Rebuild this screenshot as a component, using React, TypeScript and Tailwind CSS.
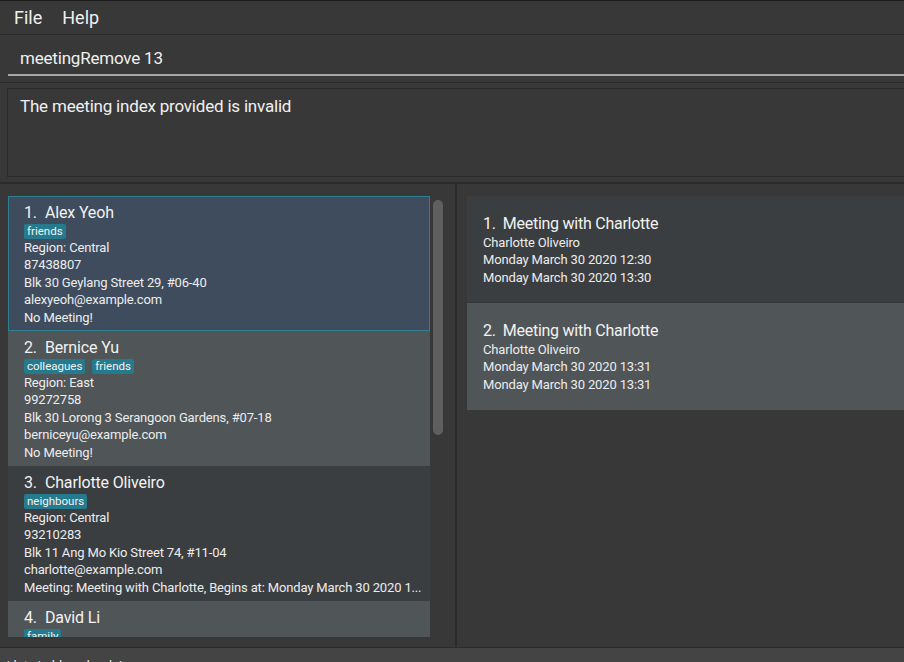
import React from "react";

type Person = {
  name: string;
  tags: string[];
  region: string;
  phone: string;
  address: string;
  email: string;
  meeting: string;
};

const persons: Person[] = [
  {
    name: "Alex Yeoh",
    tags: ["friends"],
    region: "Region: Central",
    phone: "87438807",
    address: "Blk 30 Geylang Street 29, #06-40",
    email: "alexyeoh@example.com",
    meeting: "No Meeting!",
  },
  {
    name: "Bernice Yu",
    tags: ["colleagues", "friends"],
    region: "Region: East",
    phone: "99272758",
    address: "Blk 30 Lorong 3 Serangoon Gardens, #07-18",
    email: "berniceyu@example.com",
    meeting: "No Meeting!",
  },
  {
    name: "Charlotte Oliveiro",
    tags: ["neighbours"],
    region: "Region: Central",
    phone: "93210283",
    address: "Blk 11 Ang Mo Kio Street 74, #11-04",
    email: "charlotte@example.com",
    meeting: "Meeting: Meeting with Charlotte, Begins at: Monday March 30 2020 1...",
  },
  {
    name: "David Li",
    tags: ["family"],
    region: "Region: North",
    phone: "91031282",
    address: "Blk 436 Serangoon Gardens Street 26, #16-43",
    email: "lidavid@example.com",
    meeting: "No Meeting!",
  },
];

const meetings = [
  { title: "Meeting with Charlotte", who: "Charlotte Oliveiro", start: "Monday March 30 2020 12:30", end: "Monday March 30 2020 13:30" },
  { title: "Meeting with Charlotte", who: "Charlotte Oliveiro", start: "Monday March 30 2020 13:31", end: "Monday March 30 2020 13:31" },
];

function PersonCard({ p, index }: { p: Person; index: number }) {
  const selected = index === 0;
  const bg = selected
    ? "bg-[#3f4c5e] border border-[#2f7f95]"
    : index % 2 === 1
    ? "bg-[#505558] border border-transparent"
    : "bg-[#3b3e40] border border-transparent";

  return (
    <div className={`h-[135px] shrink-0 pl-[15px] pr-[8px] pt-[6px] ${bg}`}>
      <div className="flex gap-[8px] text-[16px] leading-[20px] tracking-[-0.15px] text-[#f2f2f2] whitespace-nowrap">
        <span>{index + 1}.</span>
        <span>{p.name}</span>
      </div>
      <div className="flex gap-[7px] mt-[1px]">
        {p.tags.map((t) => (
          <span
            key={t}
            className="h-[15px] px-[3px] rounded-[2px] bg-[#267a8e] text-[11.5px] leading-[15px] text-[#f2f2f2]"
          >
            {t}
          </span>
        ))}
      </div>
      <div className="text-[13px] leading-[17.4px] tracking-[-0.15px] text-[#ececec] whitespace-nowrap overflow-hidden">
        <div>{p.region}</div>
        <div>{p.phone}</div>
        <div>{p.address}</div>
        <div>{p.email}</div>
        <div>{p.meeting}</div>
      </div>
    </div>
  );
}

export default function App() {
  return (
    <div
      className="w-[904px] h-[662px] bg-[#383838] overflow-hidden flex flex-col border-t border-[#1c1c1c] text-white"
      style={{ fontFamily: "Roboto, 'Noto Sans', sans-serif" }}
    >
      {/* menu bar */}
      <div className="h-[34px] shrink-0 flex items-center gap-[20px] pl-[14px] border-b border-[#2b2b2b] text-[18px] text-[#f0f0f0]">
        <span>File</span>
        <span>Help</span>
      </div>

      {/* command box */}
      <div className="h-[48px] shrink-0 pl-[8px] border-b border-[#2b2b2b]">
        <div className="h-[41px] border-b-2 border-[#a6a6a6] pl-[12px] pt-[12px] text-[17px] leading-[22px] tracking-[-0.2px] text-[#f0f0f0]">
          meetingRemove 13
        </div>
      </div>

      {/* result display */}
      <div className="h-[101px] shrink-0 pl-[7px] pt-[5px] pb-[5px] border-b-2 border-[#2b2b2b]">
        <div className="h-full border border-[#2b2b2b] border-r-0 pl-[12px] pt-[6px] text-[17px] leading-[22px] tracking-[-0.2px] text-[#f0f0f0]">
          The meeting index provided is invalid
        </div>
      </div>

      {/* main panels */}
      <div className="flex-1 min-h-0 flex">
        <div className="w-[457px] shrink-0 flex border-r-2 border-[#2b2b2b] pl-[8px] pt-[12px] pb-[10px]">
          <div className="w-[422px] flex flex-col overflow-hidden">
            {persons.map((p, i) => (
              <PersonCard key={p.name} p={p} index={i} />
            ))}
          </div>
          <div className="w-[25px] pl-[3px] pt-[4px]">
            <div className="w-[10px] h-[235px] rounded-full bg-[#5f5f5f]" />
          </div>
        </div>

        <div className="flex-1 pl-[10px] pt-[12px]">
          {meetings.map((m, i) => (
            <div
              key={i}
              className={`h-[107px] pl-[16px] pt-[18px] ${i % 2 === 0 ? "bg-[#3b3e40] border-b border-[#383838]" : "bg-[#505558]"}`}
            >
              <div className="flex gap-[7px] text-[16px] leading-[20px] tracking-[-0.25px] text-[#f2f2f2] whitespace-nowrap">
                <span>{i + 1}.</span>
                <span>{m.title}</span>
              </div>
              <div className="text-[13px] leading-[17.4px] tracking-[-0.15px] text-[#ececec]">
                <div>{m.who}</div>
                <div>{m.start}</div>
                <div>{m.end}</div>
              </div>
            </div>
          ))}
        </div>
      </div>

      {/* status bar */}
      <div className="h-[15px] shrink-0 border-t border-[#2b2b2b] bg-[#444444] pl-[4px] pt-[9px] text-[13px] leading-[17px] text-[#e6e6e6] overflow-hidden">
        /data/addressbook.json
      </div>
    </div>
  );
}
